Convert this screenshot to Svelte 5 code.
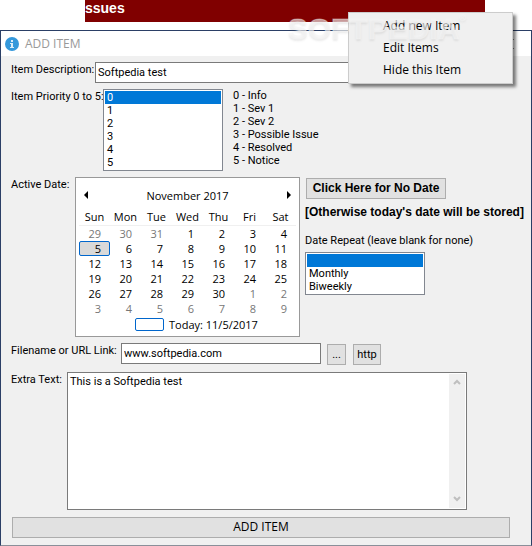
<script>
  let description = $state("Softpedia test");
  let priority = $state("0");
  let repeat = $state("");
  let link = $state("www.softpedia.com");
  let extra = $state("This is a Softpedia test");
  let selectedDay = $state(7);

  const priorities = ["Info", "Sev 1", "Sev 2", "Possible Issue", "Resolved", "Notice"];
  const weekdays = ["Sun", "Mon", "Tue", "Wed", "Thu", "Fri", "Sat"];
  const menuItems = ["Add new Item", "Edit Items", "Hide this Item"];

  // Six weeks starting on Sunday, October 29
  const weeks = Array.from({ length: 6 }, (_, w) =>
    Array.from({ length: 7 }, (_, d) => {
      const index = w * 7 + d;
      const day = new Date(2017, 9, 29 + index);
      return { index, number: day.getDate(), other: day.getMonth() !== 10 };
    })
  );
</script>

<div class="desktop">
  <header class="banner">ssues</header>

  <main class="window">
    <div class="titlebar">
      <svg width="14" height="14" viewBox="0 0 14 14" aria-hidden="true">
        <circle cx="7" cy="7" r="7" fill="#3498db" />
        <path d="M6 3h2v2H6zM5 6h3v4h1v1H5v-1h1V7H5z" fill="#d9ecf8" />
      </svg>
      <h1>ADD ITEM</h1>
      <button class="close" aria-label="Close">
        <svg width="10" height="10" viewBox="0 0 10 10"><path d="M0 0l10 10M10 0L0 10" stroke="#888" fill="none" /></svg>
      </button>
    </div>

    <form class="body" onsubmit={(e) => e.preventDefault()}>
      <div class="row description">
        <label for="description">Item Description:</label>
        <input id="description" type="text" bind:value={description} />
      </div>

      <div class="row priority">
        <label for="priority">Item Priority 0 to 5:</label>
        <select id="priority" size="6" bind:value={priority}>
          {#each priorities as _, i}
            <option value={String(i)}>{i}</option>
          {/each}
        </select>
        <ul class="legend">
          {#each priorities as name, i}
            <li>{i} - {name}</li>
          {/each}
        </ul>
      </div>

      <div class="row date">
        <span class="label">Active Date:</span>
        <section class="calendar" aria-label="Active Date">
          <div class="month">
            <button type="button" aria-label="Previous month">
              <svg width="4" height="8" viewBox="0 0 4 8"><path d="M4 0v8L0 4z" /></svg>
            </button>
            <span>November 2017</span>
            <button type="button" aria-label="Next month">
              <svg width="4" height="8" viewBox="0 0 4 8"><path d="M0 0v8l4-4z" /></svg>
            </button>
          </div>
          <table>
            <thead>
              <tr>
                {#each weekdays as name}<th>{name}</th>{/each}
              </tr>
            </thead>
            <tbody>
              {#each weeks as week}
                <tr>
                  {#each week as day}
                    <td>
                      <button
                        type="button"
                        class="day"
                        class:other={day.other}
                        class:selected={day.index === selectedDay}
                        onclick={() => (selectedDay = day.index)}
                      >{day.number}</button>
                    </td>
                  {/each}
                </tr>
              {/each}
            </tbody>
          </table>
          <button type="button" class="today" onclick={() => (selectedDay = 7)}>
            <span class="marker"></span>Today: 11/5/2017
          </button>
        </section>

        <div class="options">
          <button type="button" class="btn strong">Click Here for No Date</button>
          <strong>[Otherwise today's date will be stored]</strong>
          <label for="repeat">Date Repeat (leave blank for none)</label>
          <select id="repeat" size="3" bind:value={repeat}>
            <option value="" aria-label="None"></option>
            <option value="Monthly">Monthly</option>
            <option value="Biweekly">Biweekly</option>
          </select>
        </div>
      </div>

      <div class="row link">
        <label for="link">Filename or URL Link:</label>
        <input id="link" type="text" bind:value={link} />
        <button type="button" class="btn browse">...</button>
        <button type="button" class="btn http">http</button>
      </div>

      <div class="row extra">
        <label for="extra">Extra Text:</label>
        <div class="memo">
          <textarea id="extra" bind:value={extra}></textarea>
          <div class="scroll">
            <button type="button" aria-label="Scroll up">
              <svg width="8" height="6" viewBox="0 0 8 6"><path d="M1 5l3-3 3 3" /></svg>
            </button>
            <button type="button" aria-label="Scroll down">
              <svg width="8" height="6" viewBox="0 0 8 6"><path d="M1 1l3 3 3-3" /></svg>
            </button>
          </div>
        </div>
      </div>

      <button class="btn submit">ADD ITEM</button>
    </form>
  </main>

  <!-- Context menu -->
  <div class="menu" role="menu">
    {#each menuItems as item}
      <button role="menuitem">{item}</button>
    {/each}
  </div>
  <div class="watermark">SOFTPEDIA<sup>®</sup></div>
</div>

<style>
  :global(body) {
    background: #fff;
  }

  .desktop {
    position: relative;
    font: 11px/13px Roboto, "Liberation Sans", Arial, sans-serif;
    color: #000;
  }

  .desktop *,
  .desktop {
    box-sizing: border-box;
  }

  button,
  input,
  select,
  textarea {
    font: inherit;
    color: inherit;
    margin: 0;
    border-radius: 0;
    outline: none;
  }

  button {
    padding: 0;
    border: none;
    background: none;
  }

  svg {
    display: block;
  }

  .banner {
    height: 22px;
    margin: 0 47px 8px 85px;
    background: #800000;
    color: #fff;
    font: bold 14px/17px "Liberation Sans", Arial, sans-serif;
  }

  .window {
    border: 1px solid #2b3f66;
    border-bottom-color: #8a8f99;
    background: #f0f0f0;
  }

  .titlebar {
    display: flex;
    align-items: center;
    gap: 6px;
    height: 25px;
    padding: 0 17px 0 4px;
    background: #fff;
  }

  h1 {
    flex: 1;
    margin: 0;
    font: 12px/16px "Open Sans", "Noto Sans", sans-serif;
    color: #999;
  }

  .body {
    display: flex;
    flex-direction: column;
    padding: 6px 21px 7px 10px;
  }

  .row {
    display: flex;
    align-items: flex-start;
    margin-bottom: 6px;
  }

  .row > label,
  .row > .label {
    flex: none;
    padding-top: 1px;
    white-space: nowrap;
  }

  .description > label {
    width: 84px;
  }

  .priority > label {
    width: 92px;
  }

  .date > .label {
    width: 64px;
  }

  .link > label {
    width: 110px;
  }

  .extra > label {
    width: 56px;
  }

  input {
    height: 21px;
    padding: 0 2px;
    border: 1px solid #7a7a7a;
    background: #fff;
  }

  .description input {
    flex: 1;
    min-width: 0;
  }

  select {
    appearance: none;
    width: 120px;
    padding: 1px;
    border: 1px solid #828790;
    background: #fff;
    overflow: hidden;
  }

  option {
    height: 13px;
    min-height: 13px;
    padding: 0 2px;
    line-height: 13px;
  }

  option:checked {
    background: linear-gradient(#0078d7, #0078d7);
    -webkit-text-fill-color: #fff;
  }

  #priority {
    height: 82px;
  }

  #repeat {
    height: 43px;
  }

  .legend {
    margin: 0 0 0 10px;
    padding: 0;
    list-style: none;
  }

  .calendar {
    flex: none;
    width: 225px;
    padding: 9px 3px 4px;
    border: 1px solid #999;
    background: #fff;
    font: 11px/15px "Open Sans", "Noto Sans", sans-serif;
  }

  .month {
    display: flex;
    align-items: center;
    justify-content: space-between;
    height: 16px;
    padding: 0 4px;
  }

  .month button {
    padding: 0 1px;
  }

  table {
    width: 217px;
    margin-top: 6px;
    border-collapse: collapse;
    table-layout: fixed;
  }

  th {
    height: 16px;
    padding: 0;
    border-bottom: 1px solid #f0f0f0;
    font-weight: normal;
    text-align: center;
  }

  td {
    padding: 0;
  }

  .day {
    display: block;
    width: 31px;
    height: 15px;
    padding-right: 8px;
    border: 1px solid transparent;
    line-height: 13px;
    text-align: right;
  }

  .other {
    color: #777;
  }

  .selected {
    border-color: #0066cc;
    border-radius: 2px;
    background: #d9d9d9;
  }

  .today {
    display: flex;
    align-items: center;
    gap: 5px;
    margin: 1px 0 0 56px;
  }

  .marker {
    width: 29px;
    height: 13px;
    border: 1px solid #0066cc;
    border-radius: 2px;
  }

  .options {
    display: flex;
    flex-direction: column;
    align-items: flex-start;
    padding: 1px 0 0 5px;
    white-space: nowrap;
  }

  .options strong {
    margin: 7px 0 15px;
    font: bold 12px/13px "Liberation Sans", Arial, sans-serif;
  }

  .options label {
    margin-bottom: 5px;
  }

  .btn {
    height: 21px;
    border: 1px solid #adadad;
    background: #e1e1e1;
  }

  .strong {
    width: 140px;
    margin-left: 1px;
    font: bold 12px/13px "Liberation Sans", Arial, sans-serif;
  }

  .link {
    margin-bottom: 7px;
  }

  .link input {
    width: 200px;
  }

  .link .btn {
    margin-top: 1px;
  }

  .link .browse {
    width: 19px;
    margin: 1px 7px 0 6px;
  }

  .http {
    width: 28px;
  }

  .extra {
    margin-bottom: 7px;
  }

  .memo {
    display: flex;
    flex: 1;
    height: 138px;
    margin-right: 43px;
    padding: 1px;
    border: 1px solid #7a7a7a;
    background: #fff;
  }

  textarea {
    flex: 1;
    min-width: 0;
    padding: 1px;
    border: none;
    resize: none;
    overflow: hidden;
  }

  .scroll {
    display: flex;
    flex-direction: column;
    justify-content: space-between;
    width: 16px;
    background: #f0f0f0;
  }

  .scroll button {
    display: grid;
    place-items: center;
    height: 17px;
  }

  .scroll path {
    fill: none;
    stroke: #bfbfbf;
    stroke-width: 2;
  }

  .submit {
    margin-left: 1px;
    font: 12px/16px "Open Sans", "Noto Sans", sans-serif;
  }

  .menu {
    position: absolute;
    top: 12px;
    right: 19px;
    display: flex;
    flex-direction: column;
    width: 165px;
    padding: 2px;
    border: 1px solid #ccc;
    background: #f0f0f0;
    box-shadow: 3px 3px 3px rgba(0, 0, 0, 0.5);
  }

  .menu button {
    height: 22px;
    padding-left: 32px;
    font: 12px/16px "Open Sans", "Noto Sans", sans-serif;
    text-align: left;
  }

  .watermark {
    position: absolute;
    top: 14px;
    right: 66px;
    display: flex;
    font: bold 30px/30px "Liberation Sans", Arial, sans-serif;
    color: rgba(245, 245, 245, 0.65);
    -webkit-text-stroke: 1px rgba(245, 245, 245, 0.4);
    text-shadow: 0 2px 2px rgba(120, 120, 120, 0.15);
    pointer-events: none;
  }

  .watermark sup {
    font-size: 9px;
    line-height: 9px;
  }
</style>
